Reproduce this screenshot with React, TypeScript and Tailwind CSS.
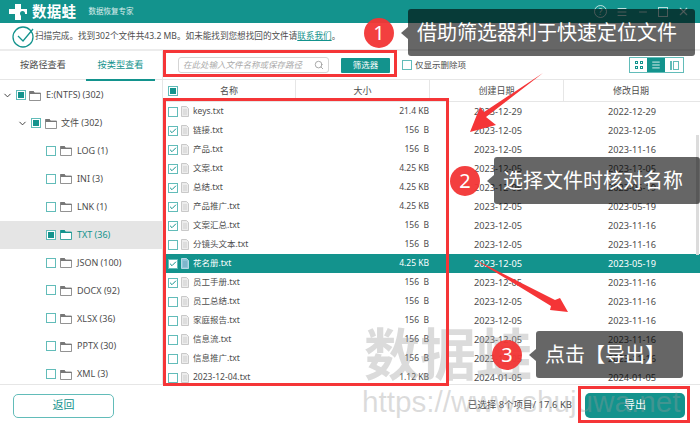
import { Check, ChevronDown, Search, X, Minus, Menu } from "lucide-react";

const font = { fontFamily: '"Noto Sans", "Noto Sans CJK SC", sans-serif' };

const treeChildren = [
  { label: "LOG (1)" },
  { label: "INI (3)" },
  { label: "LNK (1)" },
  { label: "TXT (36)", active: true },
  { label: "JSON (100)" },
  { label: "DOCX (92)" },
  { label: "XLSX (36)" },
  { label: "PPTX (30)" },
  { label: "XML (3)" },
];

const files = [
  { name: "keys.txt", size: "21.4 KB", created: "2023-12-29", modified: "2022-12-29", checked: false },
  { name: "链接.txt", size: "156  B", created: "2023-12-05", modified: "2023-12-05", checked: true },
  { name: "产品.txt", size: "156  B", created: "2023-12-05", modified: "2023-11-16", checked: true },
  { name: "文案.txt", size: "4.25 KB", created: "2023-12-05", modified: "2023-12-05", checked: true },
  { name: "总结.txt", size: "4.25 KB", created: "2023-12-05", modified: "2023-05-19", checked: true },
  { name: "产品推广.txt", size: "4.25 KB", created: "2023-12-05", modified: "2023-05-19", checked: true },
  { name: "文案汇总.txt", size: "156  B", created: "2023-12-05", modified: "2023-11-16", checked: true },
  { name: "分镜头文本.txt", size: "156  B", created: "2023-12-05", modified: "2023-11-16", checked: false },
  { name: "花名册.txt", size: "4.25 KB", created: "2023-12-05", modified: "2023-05-19", checked: true, selected: true },
  { name: "员工手册.txt", size: "156  B", created: "2023-12-05", modified: "2023-11-16", checked: true },
  { name: "员工总结.txt", size: "156  B", created: "2023-12-05", modified: "2023-11-16", checked: false },
  { name: "家庭报告.txt", size: "156  B", created: "2023-12-05", modified: "2023-11-16", checked: false },
  { name: "信息流.txt", size: "156  B", created: "2023-12-05", modified: "2023-11-16", checked: false },
  { name: "信息推广.txt", size: "156  B", created: "2023-12-05", modified: "2023-11-16", checked: false },
  { name: "2023-12-04.txt", size: "1.12 KB", created: "2024-01-05", modified: "2024-01-05", checked: false },
];

function Box({ state }: { state: "empty" | "checked" | "partial" }) {
  return (
    <span className="w-[10px] h-[10px] shrink-0 border border-[#62bcb9] bg-white flex items-center justify-center">
      {state === "checked" && <Check size={8} strokeWidth={3} className="text-[#13938d]" />}
      {state === "partial" && <span className="w-[6px] h-[6px] bg-[#13938d]" />}
    </span>
  );
}

function Folder({ active }: { active?: boolean }) {
  const c = active ? "#13938d" : "#777777";
  return (
    <svg width="12" height="11" viewBox="0 0 12 11" className="shrink-0">
      <path d="M0.5 1.5h4l1 1.5h6v7.5h-11z" fill="#fff" stroke={c} strokeWidth="0.8" />
      <path d="M0.5 1h4l1 2h6v1h-11z" fill={c} />
    </svg>
  );
}

function FileIcon({ selected }: { selected?: boolean }) {
  return (
    <svg width="8" height="11" viewBox="0 0 8 11" className="shrink-0">
      <path d="M0.5 0.5h5l2 2v8h-7z" fill={selected ? "#8fc4d8" : "#ececec"} stroke={selected ? "#b5d8e5" : "#c9c9c9"} />
      <path d="M2 4h4M2 6h4M2 8h4" stroke={selected ? "#5f9fb8" : "#c4c4c4"} strokeWidth="0.7" />
    </svg>
  );
}

function Callout({ n, text, className }: { n: string; text: string; className: string }) {
  return (
    <div className={`absolute flex items-center ${className}`}>
      <span className="w-[30px] h-[30px] rounded-full bg-[#f23535]/95 text-white text-[20px] flex items-center justify-center shrink-0">
        {n}
      </span>
      <span className="ml-[7px] w-0 h-0 border-y-[6px] border-y-transparent border-r-[7px] border-r-black/60 shrink-0" />
      <span className="h-[47px] rounded-[3px] bg-black/60 text-white text-[20px] flex items-center pl-[9px] whitespace-nowrap w-full">
        {text}
      </span>
    </div>
  );
}

export default function App() {
  return (
    <div style={font} className="relative w-[700px] h-[426px] overflow-hidden bg-white flex flex-col text-[#4d4d4d] text-[9px]">
      {/* title bar */}
      <div className="h-[23px] bg-[#13938d] flex items-center text-white shrink-0">
        <svg width="26" height="20" viewBox="0 0 26 20" className="ml-[6px]">
          <path d="M9 2h6v5h6v5h-6v6h-6v-6H3V7h6z" fill="#fff" />
          <circle cx="16.5" cy="11.5" r="2.5" fill="#13938d" />
        </svg>
        <span className="text-[14.5px] font-bold leading-none tracking-[0.3px]">数据蛙</span>
        <span className="ml-[12px] text-[7.5px] text-white/85">数据恢复专家</span>
        <div className="ml-auto flex items-center gap-[9px] pr-[10px] text-white/70">
          <span className="w-[13px] h-[13px] rounded-full border border-current text-[9px] flex items-center justify-center">?</span>
          <Menu size={12} />
          <Minus size={12} />
          <span className="w-[10px] h-[10px] border border-current" />
          <X size={13} />
        </div>
      </div>

      {/* status line */}
      <div className="h-[28px] flex items-center shrink-0 border-b-2 border-[#ececec] pl-[12px] text-[8.6px]">
        <svg width="23" height="23" viewBox="0 0 23 23" className="shrink-0">
          <circle cx="11" cy="12" r="10" fill="none" stroke="#13938d" strokeWidth="1.3" />
          <path d="M6 11l5 5 10-12" fill="none" stroke="#13938d" strokeWidth="1.3" />
        </svg>
        <span className="whitespace-nowrap">
          扫描完成。找到302个文件共43.2 MB。如未能找到您想找回的文件请<span className="text-[#13938d] underline">联系我们</span>。
        </span>
      </div>

      <div className="flex flex-1 min-h-0">
        {/* left tree */}
        <div className="w-[163px] shrink-0 border-r border-[#e6e6e6] flex flex-col">
          <div className="h-[29px] flex border-b border-[#e6e6e6] text-[9.2px] shrink-0">
            <span className="w-[86px] flex items-center justify-center">按路径查看</span>
            <span className="w-[69px] flex items-center justify-center text-[#13938d] border-b-2 border-[#13938d] h-[30px]">按类型查看</span>
          </div>
          <div className="flex flex-col pt-[1px]">
            <div className="h-[28px] flex items-center pl-[2px]">
              <ChevronDown size={11} className="text-[#333] mr-[3px]" />
              <Box state="partial" />
              <span className="ml-[3px]"><Folder /></span>
              <span className="ml-[5px]">E:(NTFS) (302)</span>
            </div>
            <div className="h-[28px] flex items-center pl-[17px]">
              <ChevronDown size={11} className="text-[#333] mr-[3px]" />
              <Box state="partial" />
              <span className="ml-[4px]"><Folder /></span>
              <span className="ml-[4px]">文件 (302)</span>
            </div>
            {treeChildren.map((t) => (
              <div key={t.label} className={`h-[27.9px] flex items-center pl-[46px] ${t.active ? "bg-[#e5e5e5] text-[#13938d]" : ""}`}>
                <Box state={t.active ? "partial" : "empty"} />
                <span className="ml-[4px]"><Folder active={t.active} /></span>
                <span className="ml-[5px]">{t.label}</span>
              </div>
            ))}
          </div>
        </div>

        {/* right table */}
        <div className="flex-1 flex flex-col min-w-0">
          <div className="h-[29px] flex items-center shrink-0 border-b border-[#e6e6e6]">
            <div className="ml-[15px] w-[151px] h-[16px] border border-[#d5d5d5] rounded-[3px] flex items-center justify-between pl-[4px] pr-[4px]">
              <span className="italic text-[#aaa] text-[8.5px] whitespace-nowrap">在此处输入文件名称或保存路径</span>
              <Search size={10} className="text-[#999]" />
            </div>
            <span className="ml-[12px] w-[49px] h-[15px] bg-[#13938d] text-white rounded-[1px] flex items-center justify-center text-[8.5px]">筛选器</span>
            <span className="ml-[12px]"><Box state="empty" /></span>
            <span className="ml-[3px] text-[8.5px]">仅显示删除项</span>
            <div className="ml-auto mr-[16px] flex h-[16px] border border-[#62bcb9]">
              <span className="w-[17px] flex items-center justify-center">
                <span className="grid grid-cols-2 gap-[2px]">
                  <i className="w-[3px] h-[3px] border border-[#13938d]" />
                  <i className="w-[3px] h-[3px] border border-[#13938d]" />
                  <i className="w-[3px] h-[3px] border border-[#13938d]" />
                  <i className="w-[3px] h-[3px] border border-[#13938d]" />
                </span>
              </span>
              <span className="w-[18px] bg-[#13938d] flex items-center justify-center">
                <Menu size={10} className="text-white" />
              </span>
              <span className="w-[18px] flex items-center justify-center gap-[1px]">
                <i className="w-[2px] h-[9px] border border-[#62bcb9]" />
                <i className="w-[6px] h-[9px] border border-[#62bcb9]" />
              </span>
            </div>
          </div>

          {/* header */}
          <div className="h-[22px] flex items-center shrink-0 border-b border-[#e6e6e6] text-[9px]">
            <div className="w-[133px] h-full flex items-center border-r border-[#e6e6e6]">
              <span className="ml-[5px]"><Box state="partial" /></span>
              <span className="flex-1 text-center pr-[15px]">名称</span>
            </div>
            <div className="w-[134px] h-full flex items-center justify-center border-r border-[#e6e6e6]">大小</div>
            <div className="w-[134px] h-full flex items-center justify-center border-r border-[#e6e6e6]">创建日期</div>
            <div className="w-[134px] h-full flex items-center justify-center">修改日期</div>
          </div>

          {/* rows */}
          <div className="flex-1 min-h-0 overflow-hidden flex flex-col">
            {files.map((f) => (
              <div key={f.name} className={`h-[19px] shrink-0 flex items-center ${f.selected ? "bg-[#13938d] text-white" : ""}`}>
                <span className="ml-[5px]"><Box state={f.checked ? "checked" : "empty"} /></span>
                <span className="ml-[3px]"><FileIcon selected={f.selected} /></span>
                <span className="ml-[4px] w-[60px] whitespace-nowrap text-[8.5px]">{f.name}</span>
                <span className="w-[176px] text-right whitespace-pre text-[8.5px]">{f.size}</span>
                <span className="ml-[45px] w-[134px] text-[9.2px]">{f.created}</span>
                <span className="text-[9.2px]">{f.modified}</span>
              </div>
            ))}
          </div>
        </div>
      </div>

      {/* footer */}
      <div className="h-[42px] shrink-0 border-t border-[#e6e6e6] flex items-center pl-[13px]">
        <span className="w-[101px] h-[24px] border border-[#62bcb9] rounded-[5px] flex items-center justify-center text-[#13938d] text-[11px]">返回</span>
        <span className="ml-auto text-[9.5px]">已选择 8个项目/ 17.6 KB</span>
        <span className="ml-[13px] mr-[15px] w-[100px] h-[25px] rounded-[5px] bg-[#13938d] text-white text-[11px] flex items-center justify-center">导出</span>
      </div>

      {/* scrollbar */}
      <div className="absolute left-[696px] top-[135px] w-[3px] h-[120px] bg-[#dcdcdc]" />

      {/* watermark */}
      <div className="absolute left-[364px] top-[325px] text-[56px] font-bold leading-none text-[#999]/35 whitespace-nowrap pointer-events-none">数据蛙</div>
      <div className="absolute left-[362px] top-[387px] text-[29.7px] leading-none text-[#999]/35 whitespace-nowrap pointer-events-none [font-family:'Liberation_Sans',sans-serif]">https://www.shujuwa.net</div>

      {/* red highlights */}
      <div className="absolute left-[163px] top-[50px] w-[234px] h-[27px] border-[3px] border-[#f53537]" />
      <div className="absolute left-[163px] top-[98px] w-[286px] h-[288px] border-[3px] border-[#f53537]" />
      <div className="absolute left-[578px] top-[386px] w-[112px] h-[37px] border-[3px] border-[#f53537]" />

      {/* arrows */}
      <svg className="absolute left-[460px] top-[65px]" width="90" height="75" viewBox="0 0 90 75">
        <path d="M83 8 L26 52 L36 60 L10 67 L20 42 L24 47 Z" fill="#f53537" />
      </svg>
      <svg className="absolute left-[465px] top-[250px]" width="110" height="70" viewBox="0 0 110 70">
        <path d="M7 8 L90 50 L95 48 L103 62 L85 60 L86 56 Z" fill="#f53537" />
      </svg>

      <Callout n="1" text="借助筛选器利于快速定位文件" className="left-[364px] top-[9px] w-[331px]" />
      <Callout n="2" text="选择文件时核对名称" className="left-[450px] top-[157px] w-[250px]" />
      <Callout n="3" text="点击【导出】" className="left-[492px] top-[331px] w-[191px]" />
    </div>
  );
}
